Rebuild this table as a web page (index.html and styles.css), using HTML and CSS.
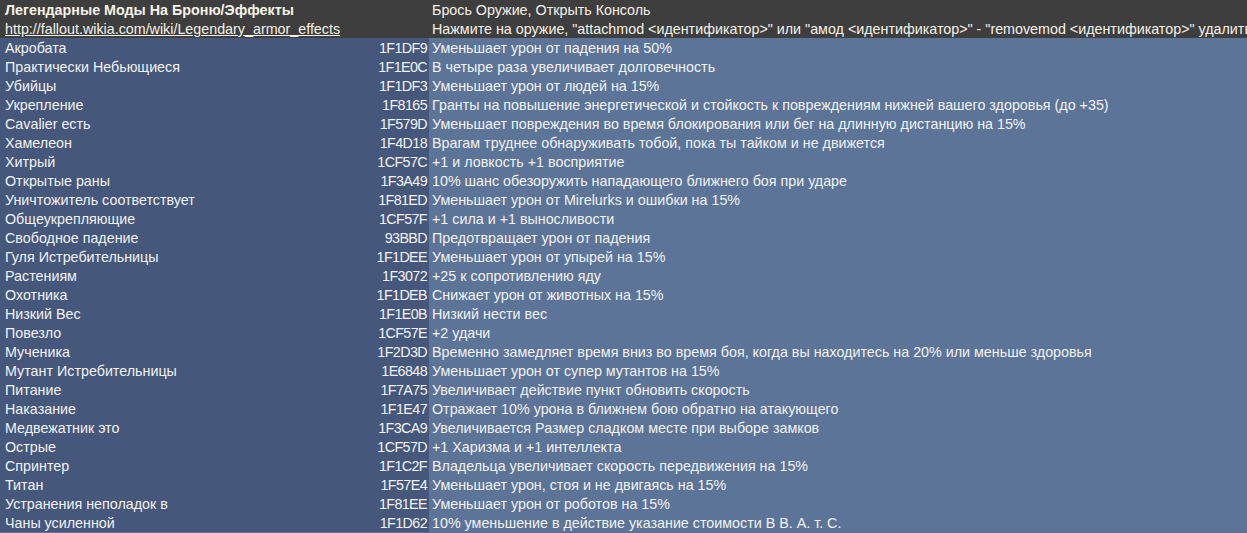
FILE: index.html
```html
<!DOCTYPE html>
<html lang="ru">
<head>
<meta charset="utf-8">
<title>Легендарные Моды На Броню/Эффекты</title>
<link rel="stylesheet" href="styles.css">
</head>
<body>
<div class="sheet">
  <div class="row head">
    <div class="c-name title">Легендарные Моды На Броню/Эффекты</div>
    <div class="c-id"></div>
    <div class="c-desc">Брось Оружие, Открыть Консоль</div>
  </div>
  <div class="row head">
    <div class="c-name"><span class="link">http://fallout.wikia.com/wiki/Legendary_armor_effects</span></div>
    <div class="c-id"></div>
    <div class="c-desc">Нажмите на оружие, "attachmod &lt;идентификатор&gt;" или "амод &lt;идентификатор&gt;" - "removemod &lt;идентификатор&gt;" удалить</div>
  </div>
  <div class="row"><div class="c-name">Акробата</div><div class="c-id">1F1DF9</div><div class="c-desc">Уменьшает урон от падения на 50%</div></div>
  <div class="row"><div class="c-name">Практически Небьющиеся</div><div class="c-id">1F1E0C</div><div class="c-desc">В четыре раза увеличивает долговечность</div></div>
  <div class="row"><div class="c-name">Убийцы</div><div class="c-id">1F1DF3</div><div class="c-desc">Уменьшает урон от людей на 15%</div></div>
  <div class="row"><div class="c-name">Укрепление</div><div class="c-id">1F8165</div><div class="c-desc">Гранты на повышение энергетической и стойкость к повреждениям нижней вашего здоровья (до +35)</div></div>
  <div class="row"><div class="c-name">Cavalier есть</div><div class="c-id">1F579D</div><div class="c-desc">Уменьшает повреждения во время блокирования или бег на длинную дистанцию на 15%</div></div>
  <div class="row"><div class="c-name">Хамелеон</div><div class="c-id">1F4D18</div><div class="c-desc">Врагам труднее обнаруживать тобой, пока ты тайком и не движется</div></div>
  <div class="row"><div class="c-name">Хитрый</div><div class="c-id">1CF57C</div><div class="c-desc">+1 и ловкость +1 восприятие</div></div>
  <div class="row"><div class="c-name">Открытые раны</div><div class="c-id">1F3A49</div><div class="c-desc">10% шанс обезоружить нападающего ближнего боя при ударе</div></div>
  <div class="row"><div class="c-name">Уничтожитель соответствует</div><div class="c-id">1F81ED</div><div class="c-desc">Уменьшает урон от Mirelurks и ошибки на 15%</div></div>
  <div class="row"><div class="c-name">Общеукрепляющие</div><div class="c-id">1CF57F</div><div class="c-desc">+1 сила и +1 выносливости</div></div>
  <div class="row"><div class="c-name">Свободное падение</div><div class="c-id">93BBD</div><div class="c-desc">Предотвращает урон от падения</div></div>
  <div class="row"><div class="c-name">Гуля Истребительницы</div><div class="c-id">1F1DEE</div><div class="c-desc">Уменьшает урон от упырей на 15%</div></div>
  <div class="row"><div class="c-name">Растениям</div><div class="c-id">1F3072</div><div class="c-desc">+25 к сопротивлению яду</div></div>
  <div class="row"><div class="c-name">Охотника</div><div class="c-id">1F1DEB</div><div class="c-desc">Снижает урон от животных на 15%</div></div>
  <div class="row"><div class="c-name">Низкий Вес</div><div class="c-id">1F1E0B</div><div class="c-desc">Низкий нести вес</div></div>
  <div class="row"><div class="c-name">Повезло</div><div class="c-id">1CF57E</div><div class="c-desc">+2 удачи</div></div>
  <div class="row"><div class="c-name">Мученика</div><div class="c-id">1F2D3D</div><div class="c-desc">Временно замедляет время вниз во время боя, когда вы находитесь на 20% или меньше здоровья</div></div>
  <div class="row"><div class="c-name">Мутант Истребительницы</div><div class="c-id">1E6848</div><div class="c-desc">Уменьшает урон от супер мутантов на 15%</div></div>
  <div class="row"><div class="c-name">Питание</div><div class="c-id">1F7A75</div><div class="c-desc">Увеличивает действие пункт обновить скорость</div></div>
  <div class="row"><div class="c-name">Наказание</div><div class="c-id">1F1E47</div><div class="c-desc">Отражает 10% урона в ближнем бою обратно на атакующего</div></div>
  <div class="row"><div class="c-name">Медвежатник это</div><div class="c-id">1F3CA9</div><div class="c-desc">Увеличивается Размер сладком месте при выборе замков</div></div>
  <div class="row"><div class="c-name">Острые</div><div class="c-id">1CF57D</div><div class="c-desc">+1 Харизма и +1 интеллекта</div></div>
  <div class="row"><div class="c-name">Спринтер</div><div class="c-id">1F1C2F</div><div class="c-desc">Владельца увеличивает скорость передвижения на 15%</div></div>
  <div class="row"><div class="c-name">Титан</div><div class="c-id">1F57E4</div><div class="c-desc">Уменьшает урон, стоя и не двигаясь на 15%</div></div>
  <div class="row"><div class="c-name">Устранения неполадок в</div><div class="c-id">1F81EE</div><div class="c-desc">Уменьшает урон от роботов на 15%</div></div>
  <div class="row"><div class="c-name">Чаны усиленной</div><div class="c-id">1F1D62</div><div class="c-desc">10% уменьшение в действие указание стоимости В В. А. т. С.</div></div>
</div>
</body>
</html>
```

FILE: styles.css
```css
html, body {
  margin: 0;
  padding: 0;
  background: #5b7497;
}
body {
  width: 1247px;
  height: 533px;
  overflow: hidden;
  font-family: "Liberation Sans", Arial, sans-serif;
  font-size: 14.3px;
  color: #f2f2f2;
}
.sheet {
  display: flex;
  flex-direction: column;
  border-bottom: 2px solid #5f6c9e;
}
.row {
  display: grid;
  grid-template-columns: 360px 69px 1fr;
  height: 19px;
  white-space: nowrap;
}
.row > div {
  box-sizing: border-box;
  height: 19px;
  padding-top: 1px;
  line-height: 18px;
}
.c-name {
  background: #45577a;
  padding-left: 5px;
}
.c-id {
  background: #45577a;
  text-align: right;
  padding-right: 2px;
  letter-spacing: -0.6px;
}
.c-desc {
  background: #5b7497;
  padding-left: 3px;
  overflow: hidden;
}
.row.head .c-name,
.row.head .c-id,
.row.head .c-desc {
  background: #3e3e3e;
  color: #f5f2e8;
}
.title {
  font-weight: bold;
}
.link {
  text-decoration: underline;
}
.row.head .c-name {
  position: relative;
  z-index: 1;
}
```
